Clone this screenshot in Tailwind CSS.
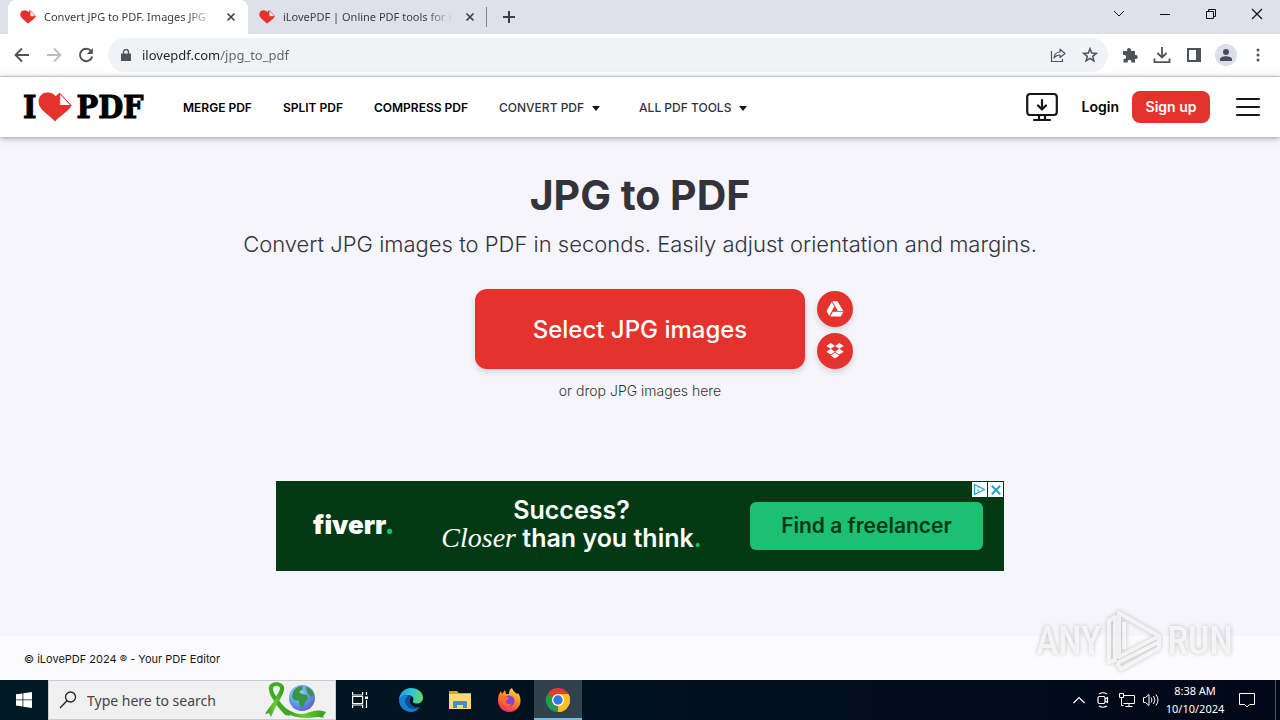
<!DOCTYPE html>
<html lang="en">
<head>
  <meta charset="UTF-8" />
  <meta name="viewport" content="width=device-width, initial-scale=1.0" />
  <title>Convert JPG to PDF. Images JPG to PDF online</title>
  <script src="https://cdn.jsdelivr.net/npm/@tailwindcss/browser@4"></script>
</head>
<body class="relative flex h-screen flex-col overflow-hidden bg-[#f5f5fb] font-['Inter',sans-serif] text-[#33333b]">
  <!-- Shared shapes -->
  <svg class="hidden">
    <symbol id="heart" viewBox="0 0 34 30">
      <path fill="#e5322d" d="M17 29.500C13.500 25 4 19.500 1.300 13.500-1 7.500 2.300.8 9 .5c4.200-.2 7 1.400 8.500 3.800L21.500.800 33.500 13.300C32 18.500 20.500 25 17 29.500z" />
      <path fill="#fff" stroke="#e5322d" stroke-width="1" stroke-linejoin="round" d="M21.700 1.400 21.700 13.500 33 13.500z" />
    </symbol>
    <symbol id="cross" viewBox="0 0 10 10">
      <path d="M1.500 1.500l7 7M8.500 1.500l-7 7" fill="none" stroke="currentColor" stroke-width="1.600" />
    </symbol>
  </svg>

  <!-- Tab strip -->
  <div class="flex h-[34px] shrink-0 bg-[#dee1e9] pl-2 font-['Noto_Sans',sans-serif] text-[11px] text-[#3c4043]">
    <div class="flex w-60 items-center rounded-t-lg bg-white px-3">
      <svg class="h-4 w-4 shrink-0"><use href="#heart" /></svg>
      <span class="ml-2 w-[172px] overflow-hidden whitespace-nowrap [mask-image:linear-gradient(90deg,#000_84%,transparent)]">Convert JPG to PDF. Images JPG</span>
      <button class="ml-3 text-[#3c4043]" aria-label="Close tab"><svg class="h-[10px] w-[10px]"><use href="#cross" /></svg></button>
    </div>
    <div class="flex w-[238px] items-center px-[11px]">
      <svg class="h-4 w-4 shrink-0"><use href="#heart" /></svg>
      <span class="ml-2 w-[172px] overflow-hidden whitespace-nowrap [mask-image:linear-gradient(90deg,#000_84%,transparent)]">iLovePDF | Online PDF tools for PDF lovers</span>
      <button class="ml-3 text-[#3c4043]" aria-label="Close tab"><svg class="h-[10px] w-[10px]"><use href="#cross" /></svg></button>
    </div>
    <div class="mt-[7px] h-5 w-px shrink-0 bg-[#80868b]"></div>
    <button class="ml-4" aria-label="New tab">
      <svg class="h-3 w-3" viewBox="0 0 12 12"><path d="M6 0v12M0 6h12" stroke="#3c4043" stroke-width="2" /></svg>
    </button>
    <div class="ml-auto flex h-7 items-center text-[#111]">
      <button class="flex w-[46px] justify-center" aria-label="Search tabs"><svg class="h-3 w-3" viewBox="0 0 12 12"><path d="M1 3l5 5 5-5" fill="none" stroke="currentColor" /></svg></button>
      <button class="flex w-[46px] justify-center" aria-label="Minimize"><svg class="h-3 w-3" viewBox="0 0 12 12"><path d="M1 6.500h10" stroke="currentColor" /></svg></button>
      <button class="flex w-[46px] justify-center" aria-label="Restore"><svg class="h-3 w-3" viewBox="0 0 12 12"><path d="M1.500 3.500h7v7h-7zM3.500 3.500v-2h7v7h-2" fill="none" stroke="currentColor" /></svg></button>
      <button class="flex w-[46px] justify-center" aria-label="Close"><svg class="h-3 w-3" viewBox="0 0 12 12"><path d="M1 1l10 10M11 1L1 11" fill="none" stroke="currentColor" stroke-width="1.200" /></svg></button>
    </div>
  </div>

  <!-- Toolbar -->
  <div class="flex h-[43px] shrink-0 items-center border-b border-[#dadce0] bg-white pr-3 pl-[14px] text-[#4f5357]">
    <div class="flex gap-4">
      <button aria-label="Back"><svg class="h-4 w-4" viewBox="0 0 16 16" fill="none" stroke="currentColor" stroke-width="1.800"><path d="M15 8H2M8 1.500L1.500 8 8 14.500" /></svg></button>
      <button aria-label="Forward" class="text-[#babcbe]"><svg class="h-4 w-4" viewBox="0 0 16 16" fill="none" stroke="currentColor" stroke-width="1.800"><path d="M1 8h13M8 1.500L14.500 8 8 14.500" /></svg></button>
      <button aria-label="Reload"><svg class="h-4 w-4" viewBox="0 0 16 16"><path d="M13.200 4.300A6.200 6.200 0 1 0 14.200 9.500" fill="none" stroke="currentColor" stroke-width="1.900" /><path d="M14.800 1v6h-6z" fill="currentColor" /></svg></button>
    </div>
    <div class="ml-[14px] flex h-[34px] flex-1 items-center rounded-full bg-[#f0f2f6] pr-[10px] pl-[13px]">
      <svg class="h-3 w-[10px]" viewBox="0 0 10 12"><path d="M0 4.500h10V12H0z" fill="currentColor" /><path d="M2.500 5V3a2.500 2.500 0 0 1 5 0v2" fill="none" stroke="currentColor" stroke-width="1.400" /></svg>
      <input type="text" value="ilovepdf.com/jpg_to_pdf" aria-label="Address" class="ml-[11px] flex-1 bg-[linear-gradient(90deg,#202124_77px,#5f6368_77px)] bg-clip-text pt-px font-['Noto_Sans',sans-serif] text-[13px] text-transparent outline-none" />
      <button class="mr-4" aria-label="Share"><svg class="h-4 w-4" viewBox="0 0 16 16" fill="none" stroke="currentColor" stroke-width="1.200" stroke-linejoin="round"><path d="M1.500 4v10.500h11V12M4 11c.5-4 3-6 6-6V2.200L15 6.500l-5 4V8C7.500 8 5.500 9 4 11z" /></svg></button>
      <button aria-label="Bookmark"><svg class="h-4 w-4" viewBox="0 0 16 16" fill="none" stroke="currentColor" stroke-width="1.500"><path d="M8 1.800l1.700 4.300 4.600.3-3.600 2.900 1.200 4.500L8 11.300l-3.900 2.500 1.200-4.500L1.700 6.400l4.600-.3z" /></svg></button>
    </div>
    <div class="ml-[11px] flex items-center gap-[11px]">
      <button class="flex w-[21px] justify-center" aria-label="Extensions"><svg class="h-4 w-4" viewBox="0 0 16 16" fill="currentColor"><path d="M1 4h4V3a2 2 0 0 1 4 0v1h4v4h.800a2 2 0 0 1 0 4H13v3.500H9.300V14.500a1.800 1.800 0 0 0-3.600 0v1H1.500V12h.700a2 2 0 0 0 0-4H1z" /></svg></button>
      <button class="flex w-[21px] justify-center" aria-label="Downloads"><svg class="h-[18px] w-[18px]" viewBox="0 0 18 18" fill="none" stroke="currentColor" stroke-width="1.800"><path d="M9 1v10M4.500 7L9 11.500 13.500 7M1.500 12.500v3.700h15v-3.700" /></svg></button>
      <button class="flex w-[21px] justify-center" aria-label="Side panel"><svg class="h-[14px] w-[14px]" viewBox="0 0 14 14"><path d="M1 1h12v12H1z" fill="none" stroke="currentColor" stroke-width="2" /><path d="M9 1h4v12H9z" fill="currentColor" /></svg></button>
      <button class="flex w-[21px] justify-center" aria-label="Profile"><svg class="h-[22px] w-[22px] shrink-0" viewBox="0 0 22 22"><circle cx="11" cy="11" r="11" fill="#dcdee9" /><circle cx="11" cy="8" r="3" fill="#484c5e" /><path d="M5 17v-1.500c0-2 3-3.200 6-3.200s6 1.200 6 3.200V17z" fill="#484c5e" /></svg></button>
      <button class="flex w-[21px] justify-center" aria-label="Menu"><svg class="h-4 w-4" viewBox="0 0 16 16" fill="currentColor"><circle cx="8" cy="3" r="1.500" /><circle cx="8" cy="8" r="1.500" /><circle cx="8" cy="13" r="1.500" /></svg></button>
    </div>
  </div>

  <!-- Site header -->
  <header class="z-10 flex h-[60px] shrink-0 items-center bg-white px-5 text-black shadow-[0_1px_6px_rgba(60,60,80,0.5)]">
    <a href="#" aria-label="iLovePDF" class="ml-[3px] flex w-[121px] items-center font-['DejaVu_Serif_Condensed','DejaVu_Serif',serif] text-[32px] leading-8 font-bold [-webkit-text-stroke:1px_#000]">
      I<svg class="ml-0.5 h-[30px] w-[34px] shrink-0"><use href="#heart" /></svg><span class="ml-1">PDF</span>
    </a>
    <nav class="ml-[39px] flex gap-[31px] pt-0.5 text-xs font-semibold whitespace-nowrap">
      <a href="#">MERGE PDF</a>
      <a href="#">SPLIT PDF</a>
      <a href="#">COMPRESS PDF</a>
      <a href="#" class="mr-2 flex items-center gap-2 font-medium text-[#33333b]">CONVERT PDF <svg class="h-[5px] w-2" viewBox="0 0 8 5"><path d="M0 0h8L4 5z" fill="#161616" /></svg></a>
      <a href="#" class="flex items-center gap-2 font-medium text-[#33333b]">ALL PDF TOOLS <svg class="h-[5px] w-2" viewBox="0 0 8 5"><path d="M0 0h8L4 5z" fill="#161616" /></svg></a>
    </nav>
    <div class="ml-auto flex items-center text-sm font-semibold">
      <a href="#" aria-label="Desktop app"><svg class="h-[30px] w-8" viewBox="0 0 32 30" fill="none" stroke="#161616" stroke-width="2.200" stroke-linecap="round" stroke-linejoin="round"><rect x="1.200" y="2" width="29.600" height="21" rx="3" /><path d="M16 8v9M12 13.500l4 4 4-4M13 23v4M19 23v4M8 28h16" /></svg></a>
      <a href="#" class="ml-6">Login</a>
      <a href="#" class="ml-[13px] flex h-8 w-[78px] items-center justify-center rounded-lg bg-[#e5322d] text-white">Sign up</a>
      <button class="ml-[26px]" aria-label="Open menu"><svg class="h-5 w-6" viewBox="0 0 24 20"><path d="M1 2h22M1 10h22M1 18h22" stroke="#161616" stroke-width="2" stroke-linecap="round" /></svg></button>
    </div>
  </header>

  <main class="flex flex-1 flex-col items-center">
    <h1 class="mt-8 text-[41px] leading-[52px] font-bold">JPG to PDF</h1>
    <p class="mt-2 text-[22px] leading-[30px] font-light text-[#33333b]">Convert JPG images to PDF in seconds. Easily adjust orientation and margins.</p>

    <!-- Upload -->
    <div class="mt-[30px] grid w-full grid-cols-[1fr_auto_1fr] items-end gap-3">
      <button class="col-start-2 h-20 w-[330px] rounded-xl bg-[#e5322d] pt-0.5 text-2xl font-medium text-white shadow-[0_3px_6px_rgba(0,0,0,0.14)]">Select JPG images</button>
      <div class="flex flex-col gap-1.5">
        <button class="flex h-9 w-9 items-center justify-center rounded-full bg-[#e5322d] shadow-[0_3px_6px_rgba(0,0,0,0.14)]" aria-label="Google Drive">
          <svg class="h-4 w-[18px]" viewBox="0 0 18 16" fill="#fff"><path d="M6.300.3h5.200l5.800 9.700h-5.400zM5.700 1.100l2.700 4.500L3.200 14.800.5 10zM7 10.700h10.500l-2.700 4.800H4.200z" /></svg>
        </button>
        <button class="flex h-9 w-9 items-center justify-center rounded-full bg-[#e5322d] shadow-[0_3px_6px_rgba(0,0,0,0.14)]" aria-label="Dropbox">
          <svg class="h-4 w-[18px]" viewBox="0 0 18 16" fill="#fff"><path d="M4.700 0L9 2.900 4.700 5.800.3 2.900zM13.300 0l4.400 2.900-4.400 2.900L9 2.900zM4.700 5.800L9 8.700l-4.300 2.900L.3 8.700zM13.300 5.800l4.400 2.900-4.400 2.900L9 8.700zM4.700 12.600L9 9.700l4.300 2.900L9 15.600z" /></svg>
        </button>
      </div>
    </div>
    <p class="mt-3 text-sm font-light">or drop JPG images here</p>

    <!-- Ad banner -->
    <aside class="relative mt-20 flex h-[90px] w-[728px] items-center bg-[#003912] pr-[21px] pl-[37px] text-white">
      <span class="w-20 pb-1 text-[26px] font-black">fiverr<span class="text-[#1dbf73]">.</span></span>
      <p class="flex-1 pb-1 text-center text-[25px] leading-7 font-semibold whitespace-nowrap">Success?<br /><span class="font-['Liberation_Serif',serif] text-[28px] leading-6 font-normal italic">Closer</span> than you think<span class="text-[#1dbf73]">.</span></p>
      <a href="#" class="flex h-12 w-[233px] items-center justify-center rounded-md bg-[#1dbf73] text-[21px] font-semibold text-[#003912]">Find a freelancer</a>
      <div class="absolute top-px right-px flex gap-px">
        <button class="flex h-[15px] w-[15px] items-center justify-center bg-white" aria-label="AdChoices"><svg class="h-[13px] w-[13px]" viewBox="0 0 13 13" fill="none" stroke="#1da4c8"><path d="M1.500 1.500l10 5-10 5z" stroke-width="1.300" stroke-linejoin="round" /><path d="M5 5.800v3M5 3.800v1" /></svg></button>
        <button class="flex h-[15px] w-[15px] items-center justify-center bg-white text-[#1da4c8]" aria-label="Close ad"><svg class="h-3 w-3"><use href="#cross" /></svg></button>
      </div>
    </aside>
  </main>

  <footer class="flex h-11 shrink-0 items-center bg-[#fbfbfe] px-6 pt-0.5 text-[11px] text-[#161616]">© iLovePDF 2024 ® - Your PDF Editor</footer>

  <!-- Taskbar -->
  <div class="flex h-10 shrink-0 items-center bg-linear-to-r from-[#001a23] to-[#020818] text-white">
    <button class="flex w-12 justify-center" aria-label="Start"><svg class="h-4 w-4" viewBox="0 0 16 16" fill="#fff"><path d="M0 2.300l6.500-.9v6.100H0zM7.300 1.300L16 0v7.500H7.300zM0 8.300h6.500v6.200L0 13.600zM7.300 8.300H16V16l-8.700-1.300z" /></svg></button>
    <label class="flex h-10 w-72 items-center border border-[#c9cccd] bg-[#f0f0f0] pr-2 pl-2.5">
      <svg class="h-[18px] w-[18px]" viewBox="0 0 18 18" fill="none" stroke="#222" stroke-width="1.300"><circle cx="11.500" cy="6" r="5" /><path d="M8 9.700L1 17" /></svg>
      <input type="text" placeholder="Type here to search" class="ml-2.5 w-40 flex-1 pt-0.5 font-['Noto_Sans',sans-serif] text-sm outline-none placeholder:text-[#454545]" />
      <svg class="h-9 w-[62px]" viewBox="0 0 62 36">
        <defs>
          <radialGradient id="globe" cx=".35" cy=".3" r=".8"><stop offset="0" stop-color="#a9d5fb" /><stop offset=".55" stop-color="#5b9aec" /><stop offset="1" stop-color="#6257c4" /></radialGradient>
          <linearGradient id="ribbon"><stop offset="0" stop-color="#238c18" /><stop offset=".5" stop-color="#6dcc33" /><stop offset="1" stop-color="#2c9a1b" /></linearGradient>
        </defs>
        <path d="M17 23C24 29 32 34 42 31s11-3 19-1l-3 4 1 2c-8-2-10 0-18 0-12 0-19-4-24-8z" fill="url(#ribbon)" />
        <path d="M14 17c5-6 7-12 3-15S5 0 4 5c-1 6 5 14 9 20l7 8 5 1-3-6C16 21 8 12 8 7c0-4 6-4 7-1 0 3-3 7-5 10z" fill="#40aa22" />
        <path d="M18 4c2 8-4 14-7 20L6 35l-2-4-4 1c5-8 9-12 13-19 2-4 3-7 5-9z" fill="url(#ribbon)" />
        <circle cx="37" cy="16" r="13" fill="url(#globe)" />
        <path d="M28 10c2-4 6-6 9-6l1 3-4 3 3 2 5 1 1 4-3 3-2 6-3-2-1-5-5-1-2-3zM41 5c4 1 7 4 8 8l-3 2-4-5zM46 19l2 1-3 4z" fill="#399542" />
      </svg>
    </label>
    <div class="flex h-10">
      <button class="flex w-12 items-center justify-center" aria-label="Task view"><svg class="h-4 w-4" viewBox="0 0 16 16" fill="none" stroke="#fff" stroke-width="1.200"><path d="M.6 0v3h10V0M.6 4.500h10v7H.6zM.6 16v-3h10v3M14.500 0v3M14.500 8v8" /><path d="M13 4.500h3v2.500h-3z" fill="#fff" stroke="none" /></svg></button>
      <button class="ml-[3px] flex w-12 items-center justify-center" aria-label="Edge">
        <svg class="h-6 w-6" viewBox="0 0 24 24">
          <defs><linearGradient id="edge" x1="0" y1=".3" x2="1" y2=".4"><stop offset="0" stop-color="#1b9be2" /><stop offset=".5" stop-color="#35c1d8" /><stop offset="1" stop-color="#62d86a" /></linearGradient></defs>
          <path d="M0 12C0 5 5.500 0 12 0c7 0 12 4.500 12 9.500 0 4-3 6-6 6-3.500 0-4.500-1.500-4-2.500 1-2 .5-3.500-1-4.500-4-3-10-1.500-13 3.500z" fill="url(#edge)" />
          <path d="M0 12c2-5 7-6 11-4-4 0-5 4-4 7 2 5 8 7 14 4-2 3-5.500 5-9 5C5.500 24 0 19 0 12z" fill="#157fd1" />
          <path d="M11 8c-4 1-5.500 5-4 8.500 2 4.500 8 6 14.500 2.500C17 20 12 18 11 14c-.5-2 0-4 1.500-5z" fill="#0d4f96" />
        </svg>
      </button>
      <button class="flex w-[50px] items-center justify-center" aria-label="File Explorer"><svg class="h-[18px] w-[22px]" viewBox="0 0 22 18"><path d="M0 0h8l2 2h12v4H0z" fill="#e6a21c" /><path d="M0 3h22v15H0z" fill="#fcd975" /><path d="M4 17v-6a1 1 0 0 1 1-1h12a1 1 0 0 1 1 1v6h-4v-3H8v3z" fill="#3c8fd0" /></svg></button>
      <button class="flex w-12 items-center justify-center" aria-label="Firefox">
        <svg class="h-6 w-6" viewBox="0 0 24 24">
          <defs><linearGradient id="fox" x1=".8" y1="0" x2=".3" y2="1"><stop offset="0" stop-color="#ffe63b" /><stop offset=".45" stop-color="#ff8a1d" /><stop offset="1" stop-color="#f5265f" /></linearGradient></defs>
          <path d="M1 12C1 8 2.500 5 4 3l1 3 3-4 1 4 3 0c0-3 1-5 3-6 1 3 3 4 5 6l1-1c2 3 2.500 5 2.500 8 0 6-5 11-11.500 11S1 19 1 12z" fill="url(#fox)" />
          <circle cx="12" cy="13" r="5.500" fill="#8440d8" /><path d="M5 9c3-1 5 0 7 1-1 2-3 2-3 4 0 2 4 3 6 1-1 4-7 5-9 1z" fill="#ff6a2b" />
        </svg>
      </button>
      <button class="ml-px flex w-12 items-center justify-center border-b-2 border-[#76b9ed] bg-[#30434d] pt-0.5" aria-label="Chrome">
        <svg class="h-6 w-6" viewBox="0 0 24 24"><path d="M12 12L1.600 6a12 12 0 0 1 20.800 0z" fill="#e33b2e" /><path d="M12 12l10.400-6A12 12 0 0 1 12 24z" fill="#fbc116" /><path d="M12 12L12 24A12 12 0 0 1 1.600 6z" fill="#229e4a" /><path d="M12 6h10.400A12 12 0 0 1 12 24l5.200-9z" fill="#fbc116" /><circle cx="12" cy="12" r="6" fill="#fff" /><circle cx="12" cy="12" r="4.700" fill="#3577e5" /></svg>
      </button>
    </div>
    <div class="ml-auto flex h-10 items-center font-['Noto_Sans',sans-serif] text-[11px]">
      <button class="flex w-6 justify-center" aria-label="Show hidden icons"><svg class="h-3 w-3" viewBox="0 0 12 12"><path d="M.5 9L6 3.500 11.500 9" fill="none" stroke="#fff" stroke-width="1.200" /></svg></button>
      <svg class="mx-1 h-4 w-4" viewBox="0 0 16 16" fill="none" stroke="#fff" stroke-width="1.200"><rect x="3" y="4.500" width="7" height="7" rx="1.500" /><path d="M10 7l2.500-1.500v5L10 9M4 2q4-2.500 8 0M4 14q4 2.500 8 0" /></svg>
      <svg class="mx-1 h-4 w-4" viewBox="0 0 16 16" fill="none" stroke="#fff"><path d="M4.500 3.500h11v8h-11M10 11.500v3M6.500 14.500h7M.5 1.500h4v4h-4zM2.500 5.500v8h2" /></svg>
      <svg class="mx-1 h-4 w-4" viewBox="0 0 16 16" fill="none" stroke="#fff"><path d="M.5 5.500h2L6 2.500v11l-3.500-3h-2zM8 5.500q2 2.500 0 5M10.500 4q3 4 0 8M13 2.500q4 5.500 0 11" /></svg>
      <div class="ml-0.5 w-[60px] text-center leading-[18px] whitespace-nowrap">8:38 AM<br />10/10/2024</div>
      <button class="ml-2.5 flex w-6 justify-center" aria-label="Notifications"><svg class="h-4 w-4" viewBox="0 0 16 16"><path d="M.5 1.500h15v11h-5L8 15l-2.500-2.500h-5z" fill="none" stroke="#fff" /></svg></button>
      <div class="mr-1 ml-4 h-10 w-px bg-[#4a5260]"></div>
    </div>
  </div>

  <!-- Watermark -->
  <div class="pointer-events-none absolute right-[47px] bottom-12 z-20 flex items-center font-['Roboto_Condensed','Roboto',sans-serif] text-[38px] leading-none font-medium text-white/75 [filter:drop-shadow(0_0_2px_rgba(0,0,0,0.3))]">
    <span>ANY</span>
    <svg class="mx-1 h-[62px] w-[58px]" viewBox="0 0 58 62" fill="none" stroke="#fff" stroke-opacity=".75" stroke-width="4" stroke-linejoin="round"><path d="M4 52V11l6-4v43zM14 3v44l40-21zM19 12v27M12 53l42-21v-6M12 53l4 6 38-21v-6" /></svg>
    <span>RUN</span>
  </div>
</body>
</html>
